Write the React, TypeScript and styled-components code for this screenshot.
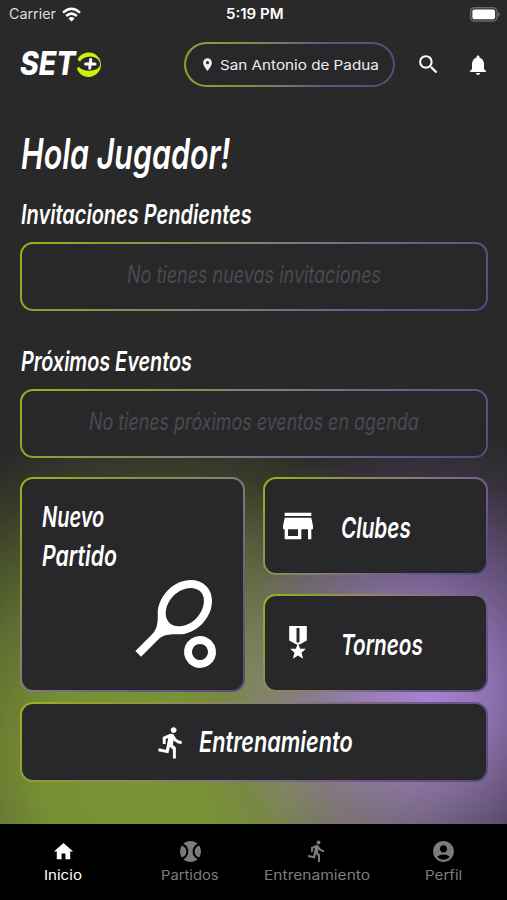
import React, { useLayoutEffect, useRef, useState } from "react";
import styled, { createGlobalStyle } from "styled-components";
import {
  MdLocationOn, MdSearch, MdNotifications, MdStore, MdDirectionsRun,
  MdHome, MdAccountCircle, MdSportsTennis, MdSportsBaseball,
} from "react-icons/md";

const GlobalStyle = createGlobalStyle`
  * { box-sizing: border-box; }
  body { margin: 0; background: #292929; }
  svg { display: block; flex: none; }
`;

const Screen = styled.div`
  width: 507px;
  height: 900px;
  overflow: hidden;
  display: flex;
  flex-direction: column;
  color: #fff;
  font-family: Inter, "Liberation Sans", sans-serif;
  background:
    radial-gradient(ellipse 245px 265px at 425px 690px, rgba(170, 134, 216, 0.96) 0%, rgba(166, 130, 210, 0.82) 25%, rgba(150, 115, 190, 0.5) 56%, rgba(120, 90, 150, 0.16) 83%, rgba(110, 80, 140, 0) 100%),
    radial-gradient(ellipse 350px 350px at 165px 765px, #7a9334 0%, #789034 35%, rgba(118, 138, 54, 0.68) 60%, rgba(100, 120, 45, 0.22) 86%, rgba(90, 110, 40, 0) 100%),
    #292929;
`;

/* Text squeezed horizontally so that its line takes exactly the given width. */
const FitBox = styled.span<{ $w: number; $size: number; $weight: number; $italic?: boolean; $line: number; $color?: string }>`
  display: block;
  flex: none;
  width: ${(p) => p.$w}px;
  height: ${(p) => p.$line}px;
  line-height: ${(p) => p.$line}px;
  font-size: ${(p) => p.$size}px;
  font-weight: ${(p) => p.$weight};
  font-style: ${(p) => (p.$italic ? "italic" : "normal")};
  color: ${(p) => p.$color || "inherit"};
  text-align: left;
  white-space: nowrap;
`;
const FitInner = styled.span`
  display: inline-block;
  transform-origin: 0 50%;
`;
type FitProps = { children: string; w: number; size: number; weight?: number; italic?: boolean; line?: number; color?: string };
function Fit({ children, w, size, weight = 400, italic, line = 30, color }: FitProps) {
  const ref = useRef<HTMLSpanElement>(null);
  const [scale, setScale] = useState(1);
  useLayoutEffect(() => {
    if (ref.current) setScale(w / ref.current.offsetWidth);
  }, [w, children]);
  return (
    <FitBox $w={w} $size={size} $weight={weight} $italic={italic} $line={line} $color={color}>
      <FitInner ref={ref} style={{ transform: `scaleX(${scale})` }}>{children}</FitInner>
    </FitBox>
  );
}

const StatusBar = styled.div`
  height: 28px;
  padding: 0 7px 0 9px;
  display: grid;
  grid-template-columns: 1fr auto 1fr;
  align-items: center;
`;
const Carrier = styled.div`
  display: flex;
  align-items: center;
  gap: 6px;
`;
const BatterySlot = styled.div`
  display: flex;
  justify-content: flex-end;
`;

const Header = styled.header`
  height: 44px;
  margin-top: 14px;
  padding-left: 20px;
  display: flex;
  align-items: center;
`;
const Logo = styled.div`
  width: 164px;
  display: flex;
  align-items: center;
`;
const LocationPill = styled.button`
  width: 211px;
  height: 45px;
  padding: 1px 0 0 14px;
  display: flex;
  align-items: center;
  gap: 5px;
  border: 2px solid transparent;
  border-radius: 23px;
  color: #eee;
  font-family: inherit;
  background:
    linear-gradient(#28282a, #28282a) padding-box,
    linear-gradient(90deg, #93a32b 0%, #857c60 42%, #6a5285 65%, #584a78 100%) border-box;
`;
const HeaderIcons = styled.div`
  display: flex;
  align-items: center;
  gap: 25px;
  margin: 1px 0 0 21px;
`;

const Main = styled.main`
  flex: 1;
  padding: 0 19px 0 20px;
  display: flex;
  flex-direction: column;
`;
const Title = styled.h1`
  margin: 44px 0 0 1px;
  height: 48px;
`;
const Section = styled.section<{ $top: number }>`
  margin-top: ${(p) => p.$top}px;
`;
const SectionTitle = styled.h2`
  margin: 0 0 11px 1px;
  height: 34px;
`;
const Card = styled.div`
  border: 2px solid transparent;
  border-radius: 13px;
  background:
    linear-gradient(#28282a, #28282a) padding-box,
    linear-gradient(135deg, #9cb41c 0%, #939d34 15%, #87777f 50%, #6a558b 80%, #554a7c 100%) border-box;
`;
const EmptyCard = styled(Card)`
  height: 69px;
  padding-bottom: 4px;
  display: flex;
  align-items: center;
  justify-content: center;
`;
const Tiles = styled.div`
  margin-top: 19px;
  display: grid;
  grid-template-columns: 225px 225px;
  grid-template-rows: 98px 98px;
  gap: 19px 18px;
`;
const MatchTile = styled(Card)`
  grid-row: span 2;
  padding: 19px 19px 0 20px;
  display: flex;
  flex-direction: column;
`;
const RacketSlot = styled.div`
  margin: 0 0 0 86px;
`;
const LinkTile = styled(Card)`
  padding: 3px 0 0 10px;
  display: grid;
  grid-template-columns: 66px 1fr;
  align-items: center;
`;
const IconSlot = styled.div`
  width: 46px;
  padding: 0 0 4px 0;
  display: flex;
  justify-content: center;
`;
const TrainingTile = styled(Card)`
  margin-top: 10px;
  padding-right: 2px;
  height: 80px;
  display: flex;
  align-items: center;
  justify-content: center;
  gap: 10px;
`;

const TabBar = styled.nav`
  height: 76px;
  padding-top: 14px;
  background: #000;
  display: grid;
  grid-template-columns: repeat(4, 1fr);
`;
const Tab = styled.div<{ $active?: boolean }>`
  display: flex;
  flex-direction: column;
  align-items: center;
  gap: 2px;
  color: ${(p) => (p.$active ? "#fff" : "#7c7c7c")};
`;
const TabIcon = styled.div`
  height: 26px;
  display: flex;
  align-items: center;
`;

const Wifi = () => (
  <svg width="19" height="15" viewBox="0 0 19 15" fill="none" stroke="#fff" strokeWidth="2.5">
    <path d="M1 5.6Q9.5 -2.2 18 5.6" />
    <path d="M4.2 9Q9.5 4.2 14.8 9" />
    <path d="M9.5 14.5L6.5 11.4Q9.5 8.8 12.5 11.4Z" fill="#fff" stroke="none" />
  </svg>
);
const Battery = () => (
  <svg width="30" height="15" viewBox="0 0 30 15">
    <rect x="0.6" y="0.6" width="26.4" height="13.6" rx="4" fill="#3a3a3a" stroke="#6b6b6b" strokeWidth="1.2" />
    <rect x="2.4" y="2.5" width="22.6" height="9.8" rx="2" fill="#fff" />
    <path d="M28 5v5q1.7-.8 1.7-2.5T28 5z" fill="#6b6b6b" />
  </svg>
);
const LogoBall = () => (
  <svg width="26" height="26" viewBox="0 0 26 26">
    <path d="M1.500 8.500A12.300 12.300 0 1 1 .800 17L3 16Q7 20.200 14 19.800Q23.800 19 24.200 13Q23 6 14.500 5.400Q6.500 5.500 4 10.800Z" fill="#d0ee10" />
    <path d="M14.700 8.600L13.700 17.200M9.600 12.900H19" stroke="#fff" strokeWidth="3" strokeLinecap="round" fill="none" />
  </svg>
);
const Medal = () => (
  <svg width="18" height="33" viewBox="0 0 18 33" fill="#fff">
    <path fillRule="evenodd" d="M.2 0h17.6v14.5L10.5 18.600h-3L.2 14.5zM7.5 2v14.5h3V2z" />
    <path d="M9 17.2l2.2 5.6h5.7l-4.4 3.9 1.7 6L9 29.4l-5.2 3.3 1.7-6L1.1 22.8h5.7z" />
  </svg>
);

export default function App() {
  const tabs = [
    { label: "Inicio", w: 38, icon: <MdHome size={23} />, active: true },
    { label: "Partidos", w: 58, icon: <MdSportsBaseball size={25} /> },
    { label: "Entrenamiento", w: 106, icon: <MdDirectionsRun size={24} /> },
    { label: "Perfil", w: 37, icon: <MdAccountCircle size={25} /> },
  ];
  return (
    <Screen>
      <GlobalStyle />
      <StatusBar>
        <Carrier>
          <Fit w={47} size={14} line={28} color="#ddd">Carrier</Fit>
          <Wifi />
        </Carrier>
        <Fit w={58} size={14} weight={600} line={28}>5:19 PM</Fit>
        <BatterySlot><Battery /></BatterySlot>
      </StatusBar>
      <Header>
        <Logo>
          <Fit w={56} size={32} weight={800} italic line={46}>SET</Fit>
          <LogoBall />
        </Logo>
        <LocationPill>
          <MdLocationOn size={15} />
          <Fit w={159} size={13.5} line={26}>San Antonio de Padua</Fit>
        </LocationPill>
        <HeaderIcons>
          <MdSearch size={25} />
          <MdNotifications size={24} />
        </HeaderIcons>
      </Header>
      <Main>
        <Title><Fit w={209} size={42} weight={600} italic line={48}>Hola Jugador!</Fit></Title>
        <Section $top={19}>
          <SectionTitle><Fit w={231} size={27} weight={600} italic line={35}>Invitaciones Pendientes</Fit></SectionTitle>
          <EmptyCard><Fit w={254} size={24} weight={400} italic color="#4b4a4f">No tienes nuevas invitaciones</Fit></EmptyCard>
        </Section>
        <Section $top={33}>
          <SectionTitle><Fit w={171} size={27} weight={600} italic line={35}>Próximos Eventos</Fit></SectionTitle>
          <EmptyCard><Fit w={330} size={24} weight={400} italic color="#4b4a4f">No tienes próximos eventos en agenda</Fit></EmptyCard>
        </Section>
        <Tiles>
          <MatchTile>
            <Fit w={62} size={28} weight={600} italic line={39}>Nuevo</Fit>
            <Fit w={75} size={28} weight={600} italic line={39}>Partido</Fit>
            <RacketSlot><MdSportsTennis size={96} /></RacketSlot>
          </MatchTile>
          <LinkTile>
            <IconSlot><MdStore size={40} /></IconSlot>
            <Fit w={70} size={29} weight={600} italic line={36}>Clubes</Fit>
          </LinkTile>
          <LinkTile>
            <IconSlot><Medal /></IconSlot>
            <Fit w={82} size={29} weight={600} italic line={36}>Torneos</Fit>
          </LinkTile>
        </Tiles>
        <TrainingTile>
          <MdDirectionsRun size={35} />
          <Fit w={154} size={29} weight={600} italic line={36}>Entrenamiento</Fit>
        </TrainingTile>
      </Main>
      <TabBar>
        {tabs.map((t) => (
          <Tab key={t.label} $active={t.active}>
            <TabIcon>{t.icon}</TabIcon>
            <Fit w={t.w} size={13.5} line={18}>{t.label}</Fit>
          </Tab>
        ))}
      </TabBar>
    </Screen>
  );
}
